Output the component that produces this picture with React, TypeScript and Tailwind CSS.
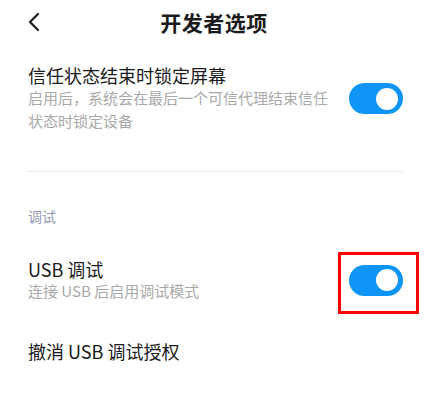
import React from "react";

const font = { fontFamily: '"Noto Sans CJK SC", "Noto Sans", sans-serif' };

const Toggle = ({ marked = false }: { marked?: boolean }) => {
  return (
    <div className="relative shrink-0">
      <div className="w-[54px] h-[31px] rounded-full bg-[#0e95f6] flex items-center justify-end pr-[5px]">
        <div className="w-[22px] h-[22px] rounded-full bg-white"></div>
      </div>
      {marked && (
        <div className="absolute -left-[11px] -top-[13px] w-[81px] h-[62px] border-[3px] border-[#ff0000]"></div>
      )}
    </div>
  );
};

const App = () => {
  return (
    <div className="w-[428px] h-[396px] bg-white overflow-hidden text-[#1b1b1b]" style={font}>
      {/* Header */}
      <div className="relative h-[43px] flex items-center justify-center">
        <svg
          className="absolute left-[27px] top-[12px]"
          width="14"
          height="20"
          viewBox="0 0 14 20"
          fill="none"
        >
          <path d="M11 2 L3 10 L11 18" stroke="#1b1b1b" strokeWidth="2.2" strokeLinecap="round" strokeLinejoin="round" />
        </svg>
        <h1 className="text-[21px] font-bold leading-[26px] tracking-[0.5px]">开发者选项</h1>
      </div>

      {/* Trust lock row */}
      <div className="flex items-center pl-[28px] pr-[25px] pt-[22px]">
        <div className="flex-1">
          <p className="text-[18px] leading-[21px]">信任状态结束时锁定屏幕</p>
          <p className="text-[15px] leading-[23px] text-[#a9a9a9] w-[305px]">
            启用后，系统会在最后一个可信代理结束信任状态时锁定设备
          </p>
        </div>
        <Toggle />
      </div>

      {/* Divider */}
      <div className="ml-[27px] mr-[25px] mt-[39px] h-px bg-[#ececec]"></div>

      {/* Section label */}
      <p className="pl-[28px] mt-[34px] text-[14px] leading-[20px] text-[#959bb3]">调试</p>

      {/* USB debug row */}
      <div className="flex items-center pl-[28px] pr-[25px] mt-[32px]">
        <div className="flex-1">
          <p className="text-[18px] leading-[22px]">USB 调试</p>
          <p className="text-[15px] leading-[22px] text-[#a9a9a9]">连接 USB 后启用调试模式</p>
        </div>
        <Toggle marked />
      </div>

      {/* Revoke */}
      <p className="pl-[28px] mt-[38px] text-[18px] leading-[22px]">撤消 USB 调试授权</p>
    </div>
  );
};

export default App;
